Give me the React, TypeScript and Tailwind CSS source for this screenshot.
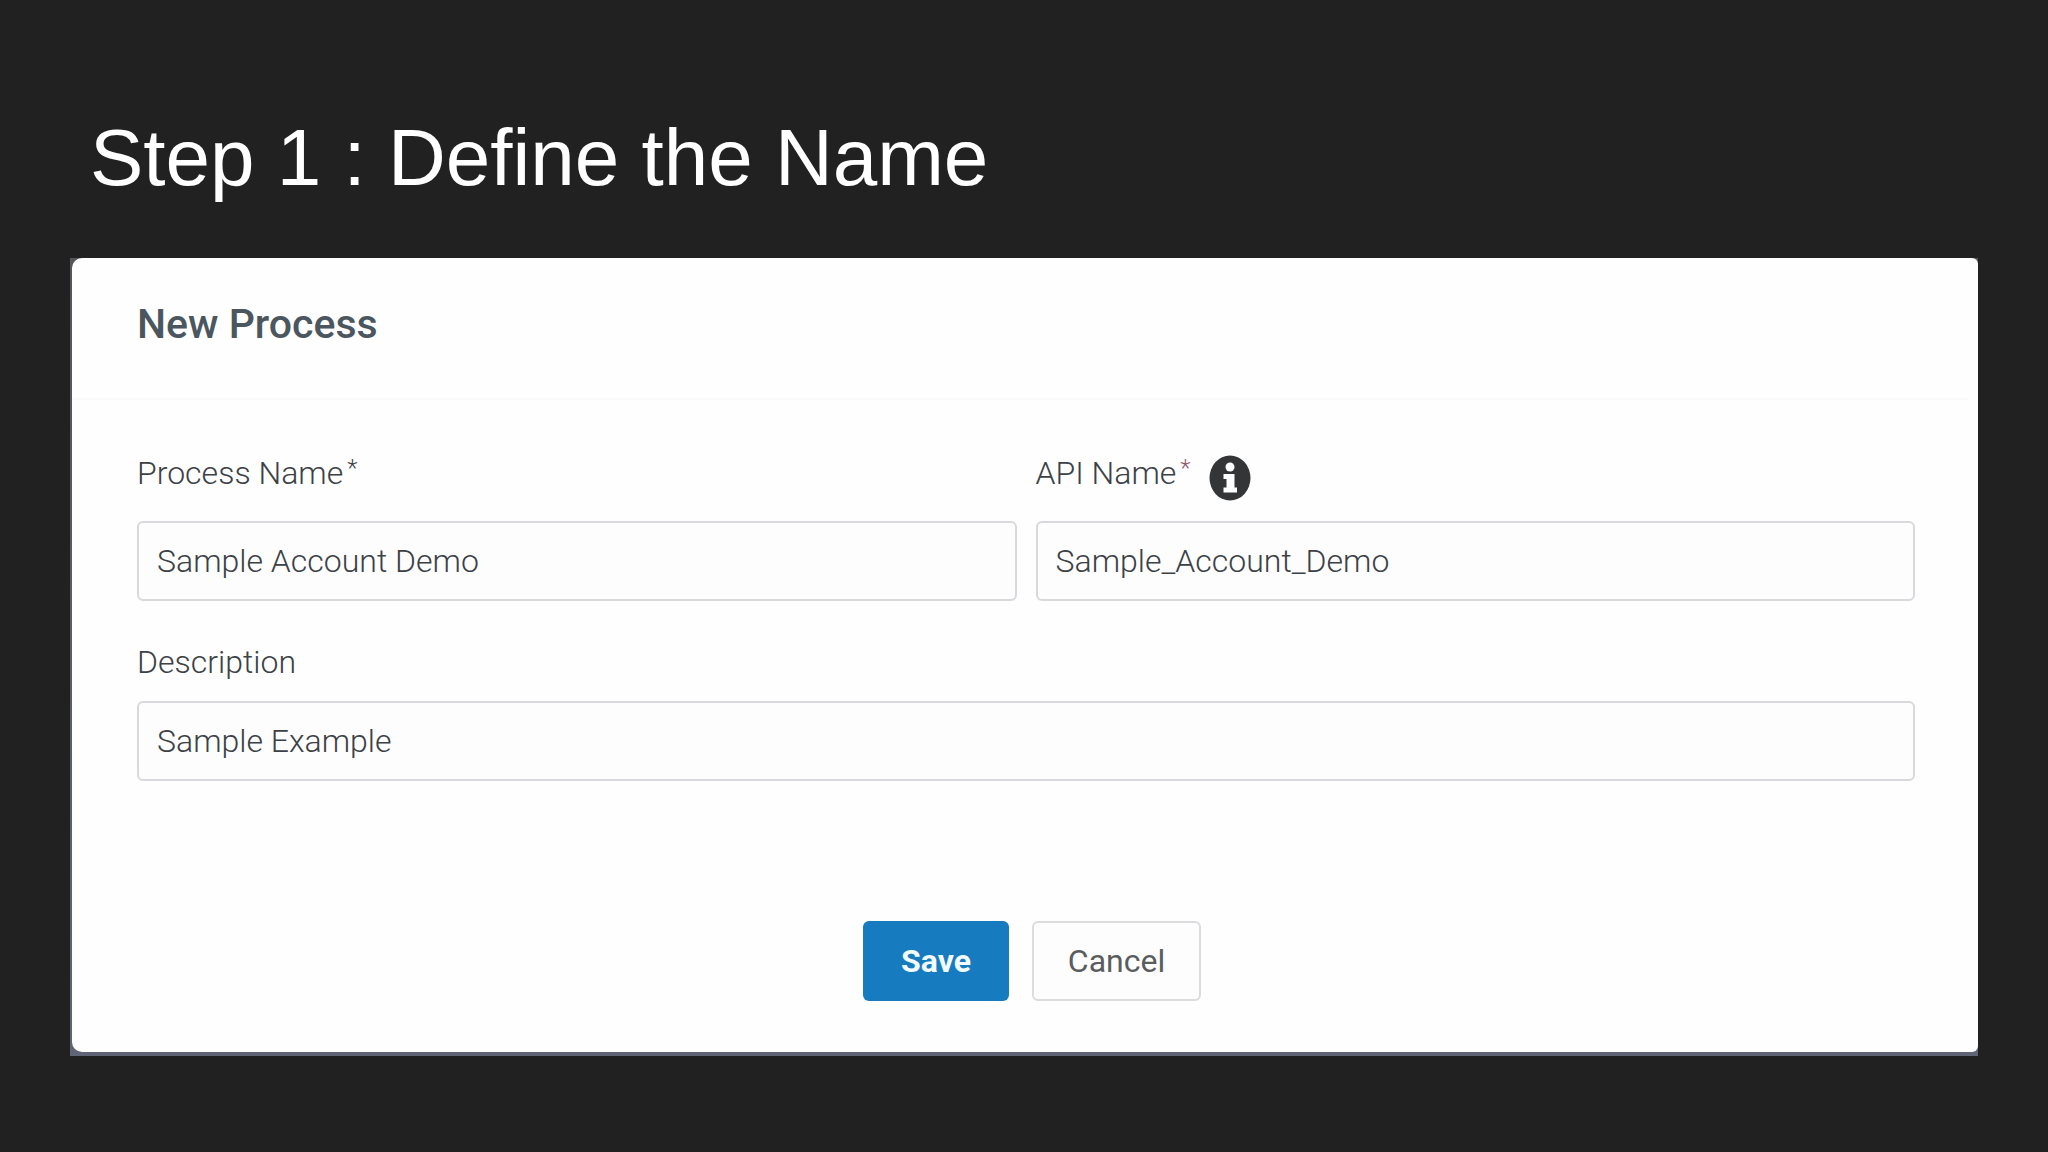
import type { ReactNode } from "react";

function InfoIcon() {
  return (
    <svg width="42" height="46" viewBox="0 0 42 46" role="img" aria-label="Information">
      <ellipse cx="21" cy="23" rx="20.5" ry="22.5" fill="#333536" />
      <ellipse cx="21" cy="12" rx="4.5" ry="4.5" fill="#fff" />
      <path d="M14.5 19H25.5V32.5H28V37.5H14.5V32.5H17.5V24H14.5Z" fill="#fff" />
    </svg>
  );
}

type FieldProps = {
  id: string;
  label: string;
  value: string;
  star?: ReactNode;
  info?: boolean;
};

function Field({ id, label, value, star, info }: FieldProps) {
  return (
    <div className="flex flex-col">
      <div className={star ? "mb-[19px] flex h-[49px] items-start" : "mb-[19px] flex items-start"}>
        <label htmlFor={id} className="flex items-start leading-[40px]">
          {label}
          {star}
        </label>
        {info && (
          <span className="mt-0.5 ml-[18px]">
            <InfoIcon />
          </span>
        )}
      </div>
      <input
        id={id}
        type="text"
        defaultValue={value}
        className="h-[80px] w-full rounded-md border-2 border-[#d9d9dd] bg-[#fdfdfe] px-[18px] font-light outline-none"
      />
    </div>
  );
}

export default function App() {
  return (
    <main className="min-h-screen bg-[#212121] px-[70px] pt-[110px] pb-[96px]">
      <h1 className="ml-5 font-['Liberation_Sans',sans-serif] text-[80px] leading-[96px] text-white">
        Step 1 : Define the Name
      </h1>

      <div className="mt-[52px] bg-linear-to-b from-[#55565a] to-[#5f6477] pb-[4px] pl-[2px]">
        <section className="rounded-l-[10px] rounded-r-md bg-[#fefefe] pb-[51px] font-['Roboto',sans-serif] text-[32px] font-light text-[#3c4146]">
          <h2 className="mr-2.5 border-b-2 border-[#fafafd] pt-[42px] pb-[50px] pl-[65px] text-[41px] leading-[48px] font-medium text-[#4b565f]">
            New Process
          </h2>

          <form className="pr-[63px] pl-[65px]" onSubmit={(e) => e.preventDefault()}>
            <div className="grid grid-cols-2 gap-x-[19px] pt-[53px]">
              <Field
                id="process-name"
                label="Process Name"
                value="Sample Account Demo"
                star={<span className="ml-1 text-[24px] leading-[30px]">*</span>}
              />
              <Field
                id="api-name"
                label="API Name"
                value="Sample_Account_Demo"
                star={<span className="ml-1 text-[24px] leading-[30px] text-[#94566a]">*</span>}
                info
              />
            </div>

            <div className="mt-[41px]">
              <Field id="description" label="Description" value="Sample Example" />
            </div>

            <div className="mt-[140px] flex justify-center gap-[23px] pl-3">
              <button
                type="submit"
                className="h-[80px] w-[146px] rounded-md bg-[#177bc0] font-bold text-[#f2fbff]"
              >
                Save
              </button>
              <button
                type="button"
                className="h-[80px] w-[169px] rounded-md border-2 border-[#dcdcdf] bg-[#fdfdfe] font-normal text-[#5a5d60]"
              >
                Cancel
              </button>
            </div>
          </form>
        </section>
      </div>
    </main>
  );
}
